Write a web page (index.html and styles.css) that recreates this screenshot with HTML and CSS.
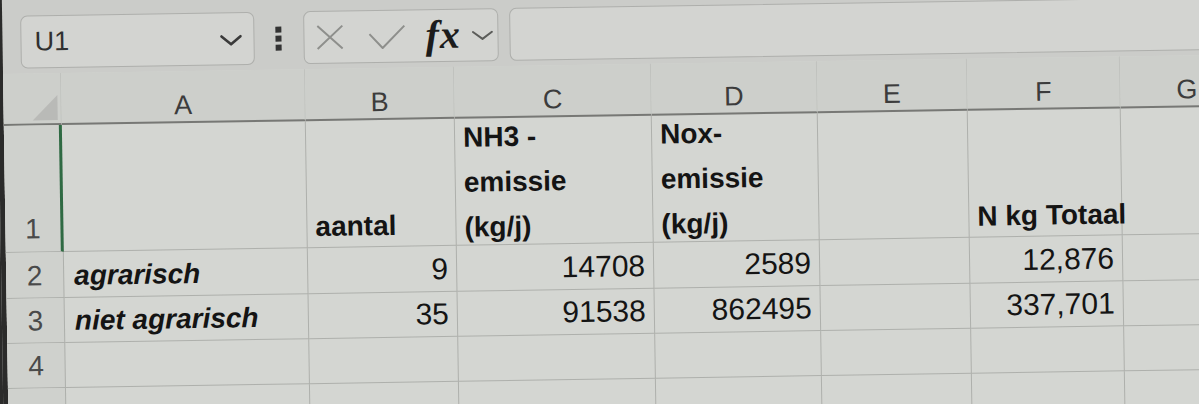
FILE: index.html
```html
<!DOCTYPE html>
<html lang="nl">
<head>
    <meta charset="UTF-8" />
    <title>Werkblad</title>
    <link rel="stylesheet" href="styles.css">
</head>
<body>

    <div class="screen">

        <!-- formulebalk -->
        <div class="formula-bar">
            <div class="name-box">
                <span>U1</span>
                <svg class="chevron" width="23" height="12" viewBox="0 0 23 12"><path d="M2 2 L11.5 10 L21 2" fill="none" stroke="#3a3a3a" stroke-width="2.6" stroke-linecap="round" stroke-linejoin="round"/></svg>
            </div>

            <div class="grip"><i></i><i></i><i></i></div>

            <div class="fx-box">
                <svg class="btn-cancel" width="27" height="25" viewBox="0 0 27 25"><path d="M1 1 L26 24 M26 1 L1 24" fill="none" stroke="#8e8f8c" stroke-width="2"/></svg>
                <svg class="btn-enter" width="37" height="24" viewBox="0 0 37 24"><path d="M1 9 L14 23 L36 1" fill="none" stroke="#8e8f8c" stroke-width="2"/></svg>
                <span class="fx">fx</span>
                <svg class="chevron-small" width="22" height="10" viewBox="0 0 22 10"><path d="M1.5 1.5 L11 8.5 L20.5 1.5" fill="none" stroke="#5c5d5a" stroke-width="2" stroke-linecap="round" stroke-linejoin="round"/></svg>
            </div>

            <div class="formula-input"></div>
        </div>

        <!-- werkblad -->
        <div class="sheet">
            <div class="corner"><span class="select-all"></span></div>
            <div class="col-head">A</div>
            <div class="col-head">B</div>
            <div class="col-head">C</div>
            <div class="col-head">D</div>
            <div class="col-head">E</div>
            <div class="col-head">F</div>
            <div class="col-head">G</div>

            <div class="row-head active">1</div>
            <div class="cell"></div>
            <div class="cell bold">aantal</div>
            <div class="cell bold wrap"><span>NH3 -<br>emissie<br>(kg/j)</span></div>
            <div class="cell bold wrap"><span>Nox-<br>emissie<br>(kg/j)</span></div>
            <div class="cell"></div>
            <div class="cell bold">N kg Totaal</div>
            <div class="cell"></div>

            <div class="row-head">2</div>
            <div class="cell label">agrarisch</div>
            <div class="cell num">9</div>
            <div class="cell num">14708</div>
            <div class="cell num">2589</div>
            <div class="cell"></div>
            <div class="cell num">12,876</div>
            <div class="cell"></div>

            <div class="row-head">3</div>
            <div class="cell label">niet agrarisch</div>
            <div class="cell num">35</div>
            <div class="cell num">91538</div>
            <div class="cell num">862495</div>
            <div class="cell"></div>
            <div class="cell num">337,701</div>
            <div class="cell"></div>

            <div class="row-head">4</div>
            <div class="cell"></div>
            <div class="cell"></div>
            <div class="cell"></div>
            <div class="cell"></div>
            <div class="cell"></div>
            <div class="cell"></div>
            <div class="cell"></div>

            <div class="row-head">5</div>
            <div class="cell"></div>
            <div class="cell"></div>
            <div class="cell"></div>
            <div class="cell"></div>
            <div class="cell"></div>
            <div class="cell"></div>
            <div class="cell"></div>
        </div>

    </div>

</body>
</html>
```

FILE: styles.css
```css
html, body {
    margin: 0;
    height: 100%;
    overflow: hidden;
    background: #2b2b2a;
}

body {
    font-family: "Liberation Sans", Arial, sans-serif;
    color: #141414;
}

/* photo is taken slightly tilted */
.screen {
    width: 1240px;
    height: 460px;
    border-left: 5px solid #2b2b2a;
    background: #cbccc9;
    transform: rotate(-0.9deg);
    transform-origin: 0 200px;
}

/* Formula bar */
.formula-bar {
    display: flex;
    align-items: center;
    height: 74px;
    padding: 16px 0 5px 18px;
    box-sizing: border-box;
}

.name-box,
.fx-box,
.formula-input {
    height: 53px;
    box-sizing: border-box;
    background: #d3d4d1;
    border: 1px solid #aeafac;
    border-radius: 7px;
}

.name-box {
    width: 234px;
    display: flex;
    align-items: center;
    justify-content: space-between;
    padding: 0 11px 0 13px;
    font-size: 27px;
    color: #303030;
}

    .name-box .chevron {
        margin-top: 2px;
    }

.grip {
    display: flex;
    flex-direction: column;
    gap: 3px;
    margin: 0 22px 0 21px;
}

    .grip i {
        width: 6px;
        height: 6px;
        background: #333;
    }

.fx-box {
    width: 195px;
    display: flex;
    align-items: center;
    padding: 0 0 0 12px;
}

    .fx-box .btn-cancel {
        margin-right: 25px;
    }

    .fx-box .btn-enter {
        margin-right: 20px;
    }

.fx {
    font-family: "Liberation Serif", "Times New Roman", serif;
    font-style: italic;
    font-weight: bold;
    font-size: 40px;
    line-height: 40px;
    color: #1c1c1c;
    letter-spacing: 1px;
    margin-right: 11px;
    margin-top: -2px;
}

.formula-input {
    flex: 1;
    margin-left: 11px;
    margin-right: -12px;
}

/* Grid */
.sheet {
    display: grid;
    grid-template-columns: 58px 244px 149px 197px 166px 150px 153px 136px 1fr;
    grid-template-rows: 52px 127px 46px 45px 45px 70px;
    background: #d4d6d2;
}

.corner,
.col-head,
.row-head,
.cell {
    box-sizing: border-box;
    border-right: 1px solid #aeb0ac;
    border-bottom: 1px solid #aeb0ac;
    display: flex;
    align-items: flex-end;
    white-space: nowrap;
}

.sheet > .cell:nth-child(8n) {
    grid-column: 8 / span 2;
}

.corner,
.col-head {
    background: #cdcfcb;
    border-bottom: 2px solid #777875;
    border-right-color: #c0c2be;
}

.corner {
    justify-content: flex-end;
    padding: 0 3px 3px 0;
}

.select-all {
    width: 0;
    height: 0;
    border-left: 25px solid transparent;
    border-bottom: 25px solid #b9bab7;
}

.col-head {
    justify-content: center;
    font-size: 27px;
    line-height: 30px;
    color: #3c3c3c;
    padding-bottom: 1px;
}

    .col-head:nth-child(8) {
        grid-column: 8 / span 2;
        justify-content: flex-start;
        padding-left: 56px;
    }

.row-head {
    justify-content: center;
    background: #cfd1cd;
    font-size: 28px;
    line-height: 30px;
    color: #4a4a4a;
    padding-bottom: 6px;
}

    .row-head.active {
        border-right: 3px solid #2f6a43;
        padding-bottom: 7px;
    }

.cell {
    font-size: 28px;
    line-height: 30px;
    padding: 0 8px 6px 8px;
}

.bold {
    font-weight: bold;
    padding-bottom: 5px;
}

.wrap span {
    line-height: 45px;
    margin-bottom: -10px;
}

.label {
    font-weight: bold;
    font-style: italic;
    padding-left: 10px;
}

.num {
    justify-content: flex-end;
    font-size: 30px;
    padding-bottom: 7px;
}
```
